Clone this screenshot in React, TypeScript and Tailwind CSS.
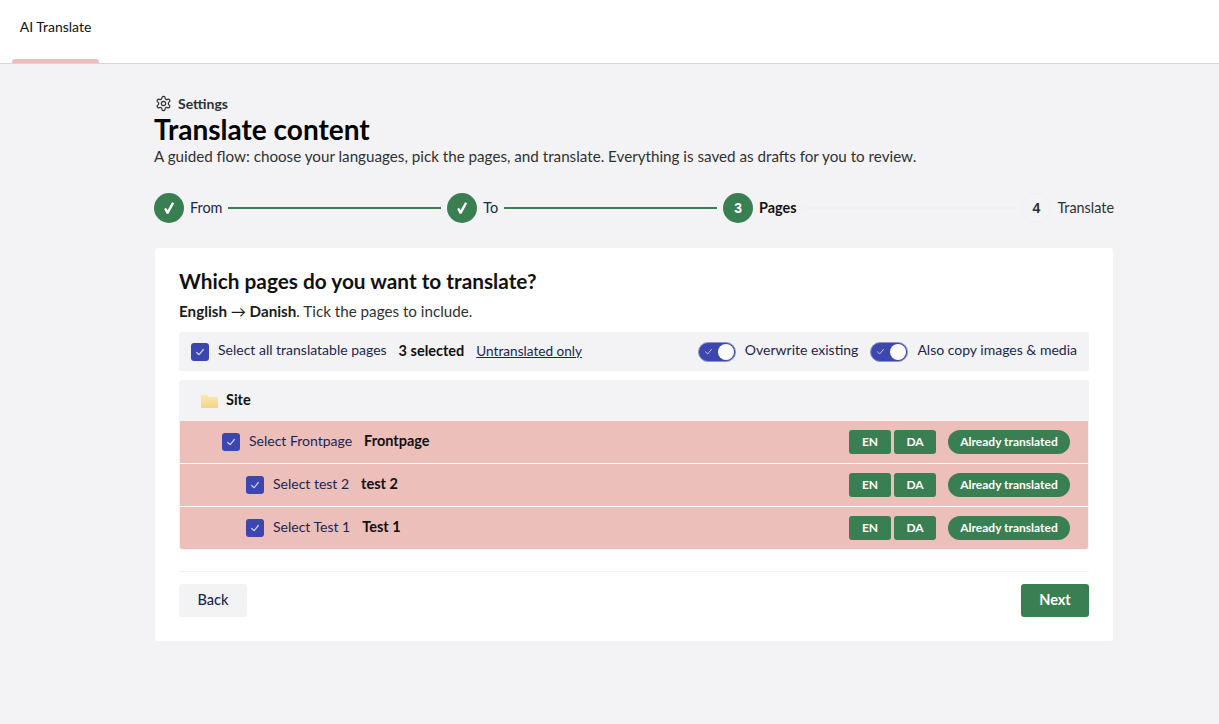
import React from "react";

const Check = ({ size = 10, w = 1.5, c = "#c9cdf0" }: { size?: number; w?: number; c?: string }) => (
  <svg width={size} height={size} viewBox="0 0 12 12" fill="none" stroke={c} strokeWidth={w}>
    <path d="M2 6.5 L5 9.2 L10 3" strokeLinecap="round" strokeLinejoin="round" />
  </svg>
);

const Box = () => (
  <div className="w-[18px] h-[18px] rounded-[3px] bg-[#3b47af] flex items-center justify-center shrink-0">
    <Check />
  </div>
);

const Toggle = () => (
  <div className="w-[38px] h-[20px] rounded-full bg-[#3b47af] border border-[#8f95c8] flex items-center justify-between pl-[5px] pr-[1px] shrink-0">
    <Check size={9} w={1.2} />
    <div className="w-[16px] h-[16px] rounded-full bg-white" />
  </div>
);

const Done = () => (
  <div className="w-[30px] h-[30px] rounded-full bg-[#3a7f52] flex items-center justify-center shrink-0">
    <svg width="12" height="14" viewBox="0 0 14 16" fill="#fff">
      <path d="M1.4 9.2 L3.4 7.6 L5.4 10.6 L10.6 1.4 L13 2.6 L6.4 14.8 L4.2 14.8 Z" />
    </svg>
  </div>
);

const Row = ({ label, name, indent, last }: { label: string; name: string; indent: string; last?: boolean }) => (
  <div className={`h-[42px] bg-[#ecbfbb] flex items-center pr-[18px] ${indent} ${last ? "" : "mb-px"}`}>
    <Box />
    <span className="ml-[9px] pb-[2px] text-[14px] leading-[20px] text-[#1b264f]">{label}</span>
    <span className="ml-3 pb-[2px] text-[14.5px] leading-[20px] font-bold text-[#111]">{name}</span>
    <div className="ml-auto flex items-center">
      <span className="w-[42px] h-6 rounded-[3px] bg-[#3a7f52] text-white text-[12px] font-bold flex items-center justify-center">EN</span>
      <span className="ml-[3px] w-[42px] h-6 rounded-[3px] bg-[#3a7f52] text-white text-[12px] font-bold flex items-center justify-center">DA</span>
      <span className="ml-3 w-[122px] h-6 rounded-full bg-[#3a7f52] text-white text-[12px] font-bold flex items-center justify-center">Already translated</span>
    </div>
  </div>
);

export default function App() {
  return (
    <div className="min-h-[724px] bg-[#f3f3f5] text-[#1b264f]" style={{ fontFamily: "Lato, 'Liberation Sans', sans-serif" }}>
      <header className="h-16 bg-white border-b border-[#d8d7d9] pl-3 flex">
        <div className="w-[87px] relative flex justify-center pt-[18px] text-[14px] text-[#111] leading-[18px]">
          AI Translate
          <div className="absolute left-0 right-0 bottom-0 h-1 rounded-t-[3px] bg-[#ecbfbb]" />
        </div>
      </header>

      <main className="ml-[154px] w-[960px] pt-[30px]">
        <div className="flex items-center h-[18px] text-[14px] font-bold text-[#303033]">
          <svg className="ml-px" width="17" height="17" viewBox="0 0 24 24" fill="none" stroke="#303033" strokeWidth="1.7" strokeLinecap="round" strokeLinejoin="round">
            <path d="M12.22 2h-.44a2 2 0 0 0-2 2v.18a2 2 0 0 1-1 1.73l-.43.25a2 2 0 0 1-2 0l-.15-.08a2 2 0 0 0-2.73.73l-.22.38a2 2 0 0 0 .73 2.73l.15.1a2 2 0 0 1 1 1.72v.51a2 2 0 0 1-1 1.74l-.15.09a2 2 0 0 0-.73 2.73l.22.38a2 2 0 0 0 2.73.73l.15-.08a2 2 0 0 1 2 0l.43.25a2 2 0 0 1 1 1.73V20a2 2 0 0 0 2 2h.44a2 2 0 0 0 2-2v-.18a2 2 0 0 1 1-1.73l.43-.25a2 2 0 0 1 2 0l.15.08a2 2 0 0 0 2.73-.73l.22-.39a2 2 0 0 0-.73-2.73l-.15-.08a2 2 0 0 1-1-1.74v-.5a2 2 0 0 1 1-1.74l.15-.09a2 2 0 0 0 .73-2.73l-.22-.38a2 2 0 0 0-2.73-.73l-.15.08a2 2 0 0 1-2 0l-.43-.25a2 2 0 0 1-1-1.73V4a2 2 0 0 0-2-2z" />
            <circle cx="12" cy="12" r="3" />
          </svg>
          <span className="ml-[6px]">Settings</span>
        </div>
        <h1 className="text-[28px] leading-[32px] font-bold text-black mt-px">Translate content</h1>
        <p className="text-[15.2px] leading-[20px] text-[#303033] mt-px">
          A guided flow: choose your languages, pick the pages, and translate. Everything is saved as drafts for you to review.
        </p>

        <div className="flex items-center gap-[6px] h-[30px] mt-[27px] text-[14.4px]">
          <Done />
          <span>From</span>
          <div className="flex-1 h-[2px] bg-[#3a7f52]" />
          <Done />
          <span>To</span>
          <div className="flex-1 h-[2px] bg-[#3a7f52]" />
          <div className="w-[30px] h-[30px] rounded-full bg-[#3a7f52] text-white text-[14px] font-bold flex items-center justify-center shrink-0" style={{ fontFamily: "'Liberation Sans', sans-serif" }}>3</div>
          <span className="font-bold text-[#111]">Pages</span>
          <div className="flex-1 h-[2px] bg-[#f0f0f2]" />
          <div className="w-[30px] h-[30px] rounded-full border border-[#f0f0f2] text-[#303033] text-[14px] font-bold flex items-center justify-center shrink-0" style={{ fontFamily: "'Liberation Sans', sans-serif" }}>4</div>
          <span className="text-[#303033]">Translate</span>
        </div>

        <section className="mt-[25px] ml-px w-[958px] h-[393px] bg-white rounded-[3px] p-6 pt-[22px]">
          <h2 className="text-[20.8px] leading-[22px] font-bold text-[#111]">Which pages do you want to translate?</h2>
          <p className="mt-[9px] h-5 text-[15.2px] leading-[20px] text-[#303033]">
            <b className="text-[#1b1b1b]">English <span className="font-normal">→</span> Danish</b>. Tick the pages to include.
          </p>

          <div className="mt-[11px] h-[39px] bg-[#f3f3f5] rounded-[3px] flex items-center pl-3 pr-3 text-[14px] leading-[20px]">
            <Box />
            <span className="ml-[9px] pb-[3px]">Select all translatable pages</span>
            <span className="ml-3 pb-[2px] text-[14.5px] font-bold text-[#111]">3 selected</span>
            <span className="ml-3 pb-[2px] text-[13.6px] underline">Untranslated only</span>
            <div className="ml-auto flex items-center">
              <Toggle />
              <span className="ml-[9px] pb-[3px]">Overwrite existing</span>
              <div className="ml-3"><Toggle /></div>
              <span className="ml-[9px] pb-[3px]">Also copy images &amp; media</span>
            </div>
          </div>

          <div className="mt-[9px] rounded-[3px] overflow-hidden border border-[#f3f3f5]">
            <div className="h-[40px] bg-[#f3f3f5] flex items-center pl-[21px]">
              <svg width="17" height="14" viewBox="0 0 17 14">
                <defs>
                  <linearGradient id="fg" x1="0" y1="0" x2="0" y2="1">
                    <stop offset="0" stopColor="#fbe9a8" />
                    <stop offset="1" stopColor="#f4d38a" />
                  </linearGradient>
                </defs>
                <path d="M0 1 H6 L8 3 H17 V14 H0 Z" fill="url(#fg)" />
              </svg>
              <span className="ml-2 pb-[2px] text-[14.5px] leading-[20px] font-bold text-[#111]">Site</span>
            </div>
            <Row label="Select Frontpage" name="Frontpage" indent="pl-[42px]" />
            <Row label="Select test 2" name="test 2" indent="pl-[66px]" />
            <Row label="Select Test 1" name="Test 1" indent="pl-[66px]" last />
          </div>

          <div className="mt-[21px] border-t border-[#f3f3f5] pt-3 flex justify-between">
            <button className="w-[68px] h-[33px] rounded-[3px] bg-[#f3f3f5] pb-[2px] text-[14.5px] font-medium text-[#1b264f]">Back</button>
            <button className="w-[68px] h-[33px] rounded-[3px] bg-[#3a7f52] pb-[2px] text-[14.5px] font-bold text-white">Next</button>
          </div>
        </section>
      </main>
    </div>
  );
}
